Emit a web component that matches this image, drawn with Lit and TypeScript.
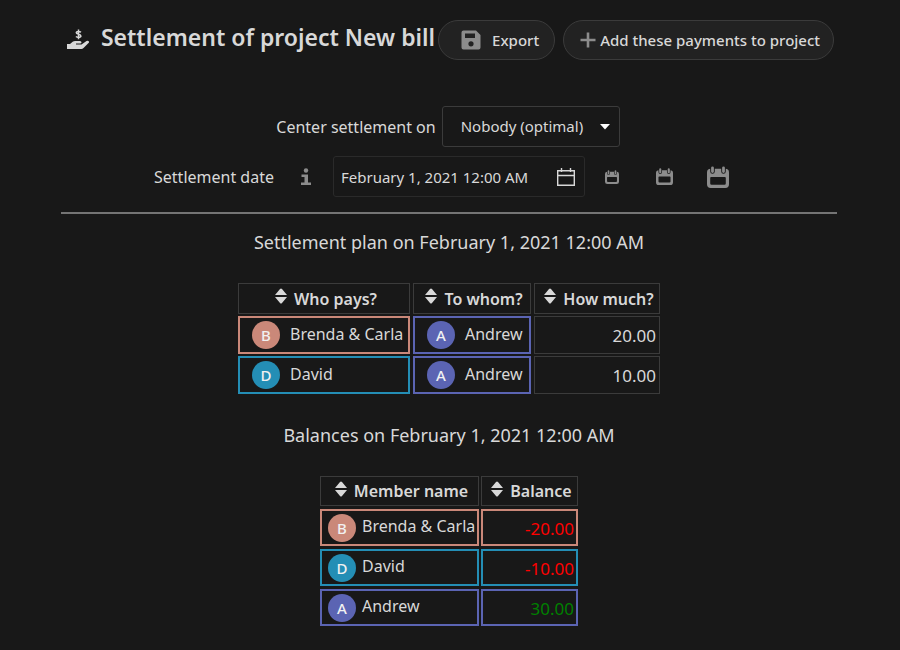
import { LitElement, html, svg, css } from "lit";
import { customElement, property, state } from "lit/decorators.js";
import { classMap } from "lit/directives/class-map.js";

type Member = { name: string; tone: string };

const BRENDA: Member = { name: "Brenda & Carla", tone: "coral" };
const DAVID: Member = { name: "David", tone: "teal" };
const ANDREW: Member = { name: "Andrew", tone: "indigo" };

const PLAN = [
  { from: BRENDA, to: ANDREW, amount: "20.00" },
  { from: DAVID, to: ANDREW, amount: "10.00" },
];

const BALANCES = [
  { member: BRENDA, amount: -20 },
  { member: DAVID, amount: -10 },
  { member: ANDREW, amount: 30 },
];

const calendarShape = svg`
  <path fill-rule="evenodd" d="M4 3H20A4 4 0 0 1 24 7V20A4 4 0 0 1 20 24H4A4 4 0 0 1 0 20V7A4 4 0 0 1 4 3ZM4.500 12A1 1 0 0 0 3.500 13V19A1.500 1.500 0 0 0 5 20.500H19A1.500 1.500 0 0 0 20.500 19V13A1 1 0 0 0 19.500 12Z"/>
  <path class="ring" d="M6 2V6M18 2V6"/>
  <path class="pin" d="M6 2V6M18 2V6"/>`;

@customElement("member-cell")
export class MemberCell extends LitElement {
  @property() name = "";
  @property() tone = "";
  static styles = css`
    :host { display: flex; align-items: center; gap: 6px; }
    .avatar {
      width: 28px; height: 28px; border-radius: 50%; flex: none;
      display: flex; align-items: center; justify-content: center;
      color: #f1f1f1; font-size: 15px; font-weight: 500; line-height: 28px;
    }
    .coral { background: #ca8879; }
    .teal { background: #248eb5; }
    .indigo { background: #5b64b3; }
    .name { line-height: 24px; padding-bottom: 4px; white-space: nowrap; }
    :host([wide]) { gap: 10px; }
    :host([wide]) .name { padding-bottom: 2px; }
  `;
  render() {
    return html`<span class=${classMap({ avatar: true, [this.tone]: true })} aria-hidden="true">${this.name.charAt(0)}</span>
      <span class="name">${this.name}</span>`;
  }
}

@customElement("app-root")
export class AppRoot extends LitElement {
  @state() private date = "February 1, 2021 12:00 AM";

  static styles = css`
    :host {
      display: block; min-height: 100vh; box-sizing: border-box;
      background: #181818; color: #d8d8d8;
      font: 16px/24px "Noto Sans", sans-serif;
    }
    * { box-sizing: border-box; }
    button, input, select { font: inherit; color: inherit; margin: 0; }
    svg { display: block; flex: none; fill: currentColor; }
    header {
      display: flex; justify-content: center; align-items: center;
      padding-top: 20px;
    }
    .hand { margin-right: 11px; }
    h2 { margin: 0 3px 6px 0; font-size: 23px; line-height: 34px; font-weight: 600; white-space: nowrap; }
    .pill {
      display: flex; align-items: center; height: 40px;
      border: 1px solid #3b3b3b; border-radius: 20px; background: #222;
      font-size: 15px; font-weight: 500; white-space: nowrap; cursor: pointer;
    }
    .pill svg { color: #8c8c8c; }
    .export { gap: 11px; padding: 0 15px 0 22px; margin-right: 8px; }
    .add { gap: 4px; padding: 0 13px 0 16px; }
    .controls { padding: 46px 2px 0 0; }
    .row { display: flex; justify-content: center; align-items: center; }
    .center { gap: 6px; padding-right: 2px; }
    .picker { position: relative; }
    .picker select {
      appearance: none; width: 178px; height: 41px; padding: 0 30px 2px 18px;
      border: 1px solid #3b3b3b; border-radius: 3px; background: #181818;
      font-size: 15px;
    }
    .picker svg { position: absolute; right: 10px; top: 18px; color: #fff; pointer-events: none; }
    .date-row { margin-top: 9px; padding-right: 15px; }
    .icon {
      display: flex; align-items: center; justify-content: center;
      padding: 0; border: 0; background: none; color: #8c8c8c; cursor: pointer;
    }
    .info { width: 24px; margin: 0 15px 0 20px; }
    .field {
      display: flex; align-items: center; width: 252px; height: 41px;
      padding: 0 8px 0 7px; border: 1px solid #2a2a2a; border-radius: 3px;
    }
    .field input {
      flex: 1; min-width: 0; padding: 0; border: 0; background: none;
      font-size: 15px; outline: none;
    }
    .field svg { color: #d8d8d8; }
    .steps { display: flex; align-items: center; margin-left: 16px; gap: 31px; }
    .steps .icon { width: 22px; }
    .ring { fill: none; stroke: #181818; stroke-width: 5; stroke-linecap: round; }
    .pin { fill: none; stroke: currentColor; stroke-width: 3; stroke-linecap: round; }
    hr { height: 2px; margin: 15px 63px 0 61px; border: 0; background: #747474; }
    section { padding-right: 2px; display: flex; flex-direction: column; align-items: center; }
    h3 { margin: 15px 0 0; font-size: 18px; line-height: 27px; font-weight: 400; }
    table { margin-top: 25px; }
    .plan { border-spacing: 3px 2px; }
    .balances { border-spacing: 2px 3px; margin-top: 24px; }
    .plan-section { padding-bottom: 11px; }
    th, td { padding: 0; border: 1px solid #3b3b3b; }
    th { height: 31px; }
    td { height: 38px; }
    .balances th { height: 30px; }
    .balances td { height: 37px; }
    .sort {
      display: flex; align-items: center; justify-content: center; gap: 7px;
      width: 100%; padding: 0 0 0 4px; border: 0; background: none;
      font-weight: 600; line-height: 28px; cursor: pointer; white-space: nowrap;
    }
    .sort svg { margin-bottom: 5px; }
    .w-from { width: 172px; }
    .w-to { width: 118px; }
    .w-much { width: 126px; }
    .w-name { width: 159px; }
    .w-balance { width: 97px; }
    td.coral { border: 2px solid #ca8879; }
    td.teal { border: 2px solid #248eb5; }
    td.indigo { border: 2px solid #5b64b3; }
    .plan .person { padding-left: 12px; }
    .balances .person { padding-left: 6px; }
    .amount { text-align: right; font-size: 17px; padding: 2px 3px 0 0; }
    .balances .amount { padding-right: 2px; }
    .neg { color: #f00; }
    .pos { color: #008000; }
  `;

  private heading(label: string, width: string) {
    return html`<th class=${width} scope="col"><button class="sort">
      <svg width="12" height="16" viewBox="0 0 12 16"><path d="M0 7 5 1Q6 0 7 1L12 7ZM0 9H12L7 15Q6 16 5 15Z"/></svg>${label}</button></th>`;
  }

  private person(m: Member, wide = false) {
    return html`<td class="person ${m.tone}"><member-cell ?wide=${wide} name=${m.name} tone=${m.tone}></member-cell></td>`;
  }

  private calendar(size: number, label: string) {
    return html`<button class="icon" aria-label=${label}>
      <svg width=${size} height=${size} viewBox="0 0 24 24">${calendarShape}</svg></button>`;
  }

  render() {
    return html`
      <header>
        <svg class="hand" width="24" height="22" viewBox="0 0 24 22">
          <path d="M1 15H4L7 12.500Q8 12 9 12H14Q15.500 12 15.500 13.500 15.500 14.500 14 14.500H10V15.500H15.500L20.500 12Q22 11.500 23 12.500V13.500L17.500 19Q16.500 20 15.500 20H1Z"/>
          <path d="M15 3.300Q14 2.400 12.500 2.400 10.300 2.400 10.300 3.800 10.300 4.800 12.500 5.200 14.900 5.700 14.900 7 14.900 8.400 12.500 8.400 11 8.400 9.900 7.500M12.500 .5V10.200" fill="none" stroke="currentColor" stroke-width="1.500"/>
        </svg>
        <h2>Settlement of project New bill</h2>
        <button class="pill export">
          <svg width="20" height="20" viewBox="0 0 20 20"><path fill-rule="evenodd" d="M2.500 .5H15L19.500 5V17.500A2 2 0 0 1 17.500 19.500H2.500A2 2 0 0 1 .5 17.500V2.500A2 2 0 0 1 2.500 .5ZM4 3.500V8H14V3.500ZM10 11.200A2.600 2.600 0 1 0 10 16.400 2.600 2.600 0 1 0 10 11.200Z"/></svg>
          Export
        </button>
        <button class="pill add">
          <svg width="16" height="16" viewBox="0 0 16 16"><path d="M6.700 .5H9.300V6.700H15.500V9.300H9.300V15.500H6.700V9.300H.5V6.700H6.700Z"/></svg>
          Add these payments to project
        </button>
      </header>

      <div class="controls">
        <div class="row center">
          <label for="center">Center settlement on</label>
          <span class="picker">
            <select id="center"><option>Nobody (optimal)</option></select>
            <svg width="10" height="6" viewBox="0 0 10 6"><path d="M0 0H10L5 5.500Z"/></svg>
          </span>
        </div>
        <div class="row date-row">
          <label for="date">Settlement date</label>
          <button class="icon info" aria-label="About the settlement date">
            <svg width="12" height="18" viewBox="0 0 12 18"><circle cx="6" cy="2.500" r="2.200"/><path d="M1.500 6.500H8V14.500H11V17H1V14.500H4.500V9H1.500Z"/></svg>
          </button>
          <span class="field">
            <input id="date" type="text" .value=${this.date}
              @input=${(e: Event) => (this.date = (e.target as HTMLInputElement).value)} />
            <svg width="20" height="20" viewBox="0 0 20 20"><path fill="none" stroke="currentColor" stroke-width="1.400" d="M1.700 3.700H18.300V18.300H1.700ZM1.700 8.500H18.300M5.500 1V5M14.500 1V5"/></svg>
          </span>
          <span class="steps">
            ${this.calendar(14, "Previous day")}
            ${this.calendar(17, "Previous month")}
            ${this.calendar(22, "Previous year")}
          </span>
        </div>
      </div>
      <hr />

      <section class="plan-section">
        <h3>Settlement plan on ${this.date}</h3>
        <table class="plan">
          <thead><tr>
            ${this.heading("Who pays?", "w-from")}
            ${this.heading("To whom?", "w-to")}
            ${this.heading("How much?", "w-much")}
          </tr></thead>
          <tbody>
            ${PLAN.map((p) => html`<tr>${this.person(p.from, true)}${this.person(p.to, true)}<td class="amount">${p.amount}</td></tr>`)}
          </tbody>
        </table>
      </section>
      <section>
        <h3>Balances on ${this.date}</h3>
        <table class="balances">
          <thead><tr>
            ${this.heading("Member name", "w-name")}
            ${this.heading("Balance", "w-balance")}
          </tr></thead>
          <tbody>
            ${BALANCES.map((b) => html`<tr>${this.person(b.member)}
              <td class="amount ${b.member.tone} ${b.amount < 0 ? "neg" : "pos"}">${b.amount.toFixed(2)}</td></tr>`)}
          </tbody>
        </table>
      </section>
    `;
  }
}
